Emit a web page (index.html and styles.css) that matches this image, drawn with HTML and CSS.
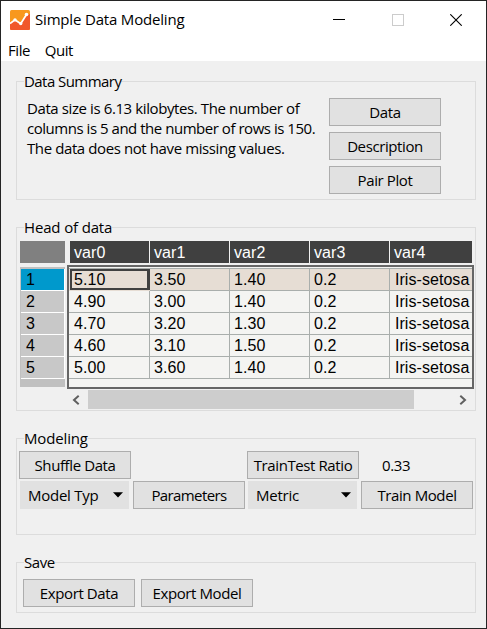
FILE: index.html
```html
<!DOCTYPE html>
<html lang="en">
<head>
<meta charset="utf-8">
<title>Simple Data Modeling</title>
<link rel="stylesheet" href="styles.css">
</head>
<body>
<div class="window">
  <header class="titlebar">
    <svg class="logo" width="20" height="20" viewBox="0 0 20 20">
      <rect width="20" height="20" rx="1.5" fill="#f8981d"/>
      <path d="M0 13 L4 10 L10.5 14.5 L17 5 L20 4 V18.5 A1.5 1.5 0 0 1 18.5 20 H1.5 A1.5 1.5 0 0 1 0 18.5Z" fill="#f1592a"/>
      <path d="M0 13.5 L5 9.7 L10.7 13.8 L16.5 4.5" fill="none" stroke="#fff" stroke-width="1.7"/>
      <circle cx="5" cy="9.9" r="1.7" fill="#fff"/><circle cx="10.7" cy="13.6" r="1.7" fill="#fff"/><circle cx="16.5" cy="4.5" r="1.8" fill="#fff"/>
    </svg>
    <h1 class="title">Simple Data Modeling</h1>
    <div class="controls">
      <svg width="12" height="12" viewBox="0 0 12 12"><path d="M0 5.5H12" stroke="#000"/></svg>
      <svg width="12" height="12" viewBox="0 0 12 12"><rect x=".5" y=".5" width="11" height="11" fill="none" stroke="#ccc"/></svg>
      <svg width="12" height="12" viewBox="0 0 12 12"><path d="M.3 .3L11.7 11.7M11.7 .3L.3 11.7" stroke="#000" stroke-width="1.1"/></svg>
    </div>
  </header>
  <nav class="menu"><span class="file">File</span><span>Quit</span></nav>
  <main>
    <section class="group summary">
      <h2 class="legend l-summary">Data Summary</h2>
      <p class="info"><span>Data size is 6.13 kilobytes. The number of</span><br><span class="tight">columns is 5 and the number of rows is 150.</span><br><span>The data does not have missing values.</span></p>
      <div class="stack">
        <button>Data</button>
        <button>Description</button>
        <button>Pair Plot</button>
      </div>
    </section>

    <section class="group head">
      <h2 class="legend l-head">Head of data</h2>
      <div class="sheet">
        <div class="corner"></div>
        <div class="columns"><span>var0</span><span>var1</span><span>var2</span><span>var3</span><span>var4</span></div>
        <div class="index"><span class="current">1</span><span>2</span><span>3</span><span>4</span><span>5</span></div>
        <div class="frame">
          <div class="row selected"><span class="active">5.10</span><span>3.50</span><span>1.40</span><span>0.2</span><span>Iris-setosa</span></div>
          <div class="row"><span>4.90</span><span>3.00</span><span>1.40</span><span>0.2</span><span>Iris-setosa</span></div>
          <div class="row"><span>4.70</span><span>3.20</span><span>1.30</span><span>0.2</span><span>Iris-setosa</span></div>
          <div class="row"><span>4.60</span><span>3.10</span><span>1.50</span><span>0.2</span><span>Iris-setosa</span></div>
          <div class="row"><span>5.00</span><span>3.60</span><span>1.40</span><span>0.2</span><span>Iris-setosa</span></div>
        </div>
      </div>
      <div class="scrollbar">
        <svg width="8" height="10" viewBox="0 0 8 10"><path d="M6.7 .8L2 5L6.7 9.2" fill="none" stroke="#606060" stroke-width="2"/></svg>
        <div class="thumb"></div>
        <svg width="8" height="10" viewBox="0 0 8 10"><path d="M1.3 .8L6 5L1.3 9.2" fill="none" stroke="#606060" stroke-width="2"/></svg>
      </div>
    </section>

    <section class="group modeling">
      <h2 class="legend l-model">Modeling</h2>
      <div class="grid">
        <button>Shuffle Data</button>
        <button class="ratio">TrainTest Ratio</button>
        <span class="value">0.33</span>
        <div class="combo"><span class="choice">Model Typ</span><svg width="10" height="6" viewBox="0 0 10 6"><path d="M0 .3H10L5 5.5Z"/></svg></div>
        <button class="tight">Parameters</button>
        <div class="combo"><span class="choice">Metric</span><svg width="10" height="6" viewBox="0 0 10 6"><path d="M0 .3H10L5 5.5Z"/></svg></div>
        <button>Train Model</button>
      </div>
    </section>

    <section class="group save">
      <h2 class="legend l-save">Save</h2>
      <div class="actions">
        <button>Export Data</button>
        <button>Export Model</button>
      </div>
    </section>
  </main>
</div>
</body>
</html>
```
FILE: styles.css
```css
* { box-sizing: border-box; }
body { margin: 0; background: #fff; color: #000; font: 15px/20px "Open Sans", "Noto Sans", sans-serif; letter-spacing: -0.4px; }
h1, h2, p { margin: 0; font: inherit; }
svg { display: block; flex: none; }
.window { width: 487px; height: 629px; border: 1px solid #242424; background: #f0f0f0; }
.titlebar { display: flex; align-items: center; height: 37px; padding: 0 24px 0 9px; background: #fff; }
.title { margin: -2px 0 0 5px; letter-spacing: -0.18px; white-space: nowrap; }
.controls { display: flex; gap: 46.5px; margin-left: auto; }
.menu { display: flex; gap: 14.5px; height: 23px; padding: 2px 7px 0; background: #fff; }
main { padding: 20px 10px 0 15px; }
.group { width: 460px; border: 1px solid #dcdcdc; }
.legend { width: max-content; height: 20px; margin: -10px 0 0 7px; background: #f0f0f0; line-height: 18px; white-space: nowrap; }
.l-summary { letter-spacing: -0.55px; }
.l-head { letter-spacing: -0.15px; }
.l-model { letter-spacing: -0.15px; }
.summary { display: grid; grid-template-columns: 302px 112px; grid-template-rows: 10px 1fr; height: 119px; padding-left: 10px; }
.summary .legend { grid-column: 1 / 3; margin-left: -3px; }
.info { padding-top: 6px; white-space: nowrap; }
.info .tight { letter-spacing: -0.47px; }
.stack { display: flex; flex-direction: column; gap: 6px; padding-top: 6px; }
button { width: 112px; height: 28px; padding: 0 0 1px; border: 1px solid #adadad; border-radius: 0; background: #e1e1e1; color: #000; font: inherit; letter-spacing: inherit; text-align: center; white-space: nowrap; }
button.tight { letter-spacing: -0.6px; }
.head { height: 184px; margin-top: 27px; padding: 0 1px 0 3px; }
.head .legend { margin-left: 4px; }
.sheet { display: grid; grid-template-columns: 45px 407px; grid-template-rows: 22px 124px; column-gap: 2px; row-gap: 2px; margin-top: 3px; font: 16px/22px "Liberation Sans", sans-serif; letter-spacing: 0.05px; }
.corner { background: #808080; }
.columns { display: flex; margin: 0 2px 0 3px; overflow: hidden; background: #404040; color: #fff; }
.columns span { flex: 0 0 80px; padding-left: 4px; border-right: 1px solid #f0f0f0; line-height: 23px; }
.columns span:last-child { border: 0; }
.index { height: 120px; margin-top: 2px; padding: 2px 0 0 1px; background: #c0c0c0; }
.index span { display: block; width: 44px; height: 22px; padding-left: 5px; border: solid #fff; border-width: 0 1px 1px 0; background: #c8c8c8; }
.index .current { background: #0099cc; }
.frame { overflow: hidden; border: 2px solid #666; background: #f4f4f2; }
.row { display: flex; width: 491px; height: 22px; }
.row:first-child { margin-top: 1px; height: 23px; border-top: 1px solid #a9aeac; }
.row span { flex: 0 0 80px; height: 22px; padding-left: 4px; border: solid #a9aeac; border-width: 0 1px 1px 0; white-space: nowrap; }
.row span:first-child { flex-basis: 81px; padding-left: 5px; }
.row span:last-child { flex-basis: 90px; padding-left: 5px; }
.selected { background: #e6ddd4; }
.row .active:first-child { height: 21px; margin-left: 1px; flex-basis: 80px; padding-left: 2px; border: 2px solid #404040; border-right-width: 3px; line-height: 18px; }
.scrollbar { display: flex; align-items: center; height: 19px; margin: 1px 5px 0 52px; }
.thumb { width: 326px; height: 19px; margin: 0 45px 0 8px; background: #cdcdcd; }
.modeling { height: 97px; margin-top: 27px; }
.grid { display: grid; grid-template-columns: repeat(4, 112px); gap: 2px; margin: 2px 0 0 2px; }
.ratio { grid-column: 3; }
.value { padding-left: 21px; line-height: 28px; }
.combo { display: flex; align-items: center; width: 109px; height: 28px; margin-left: 1px; padding: 0 6px 0 8px; background: #e1e1e1; letter-spacing: -0.25px; }
.choice { margin-right: auto; white-space: nowrap; }
.save { height: 51px; margin-top: 27px; }
.actions { display: flex; gap: 6px; margin: 6px 0 0 6px; }
```
